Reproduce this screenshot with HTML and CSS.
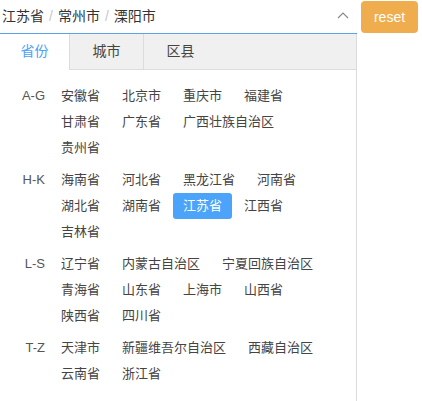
FILE: index.html
```html
<!DOCTYPE html>
<html lang="zh">
<head>
<meta charset="utf-8">
<link rel="stylesheet" href="styles.css">
</head>
<body>
<div class="bar">
  <div class="picker">
    <div class="input">
      <span class="value">江苏省<span class="sep">/</span>常州市<span class="sep">/</span>溧阳市</span>
      <svg class="chev" width="12" height="7" viewBox="0 0 12 7"><path d="M1 6 L6 1 L11 6" fill="none" stroke="#8a8a8a" stroke-width="1.2"/></svg>
    </div>
    <div class="panel">
      <div class="tabs">
        <div class="tab tab-first active">省份</div>
        <div class="tab">城市</div>
        <div class="tab">区县</div>
      </div>
      <div class="content">
        <div class="group">
          <div class="label">A-G</div>
          <div class="items">
            <span class="item">安徽省</span><span class="item">北京市</span><span class="item">重庆市</span><span class="item">福建省</span><span class="item">甘肃省</span><span class="item">广东省</span><span class="item">广西壮族自治区</span><span class="item">贵州省</span>
          </div>
        </div>
        <div class="group">
          <div class="label">H-K</div>
          <div class="items">
            <span class="item">海南省</span><span class="item">河北省</span><span class="item">黑龙江省</span><span class="item">河南省</span><span class="item">湖北省</span><span class="item">湖南省</span><span class="item selected">江苏省</span><span class="item">江西省</span><span class="item">吉林省</span>
          </div>
        </div>
        <div class="group">
          <div class="label">L-S</div>
          <div class="items">
            <span class="item">辽宁省</span><span class="item">内蒙古自治区</span><span class="item">宁夏回族自治区</span><span class="item">青海省</span><span class="item">山东省</span><span class="item">上海市</span><span class="item">山西省</span><span class="item">陕西省</span><span class="item">四川省</span>
          </div>
        </div>
        <div class="group">
          <div class="label">T-Z</div>
          <div class="items">
            <span class="item">天津市</span><span class="item">新疆维吾尔自治区</span><span class="item">西藏自治区</span><span class="item">云南省</span><span class="item">浙江省</span>
          </div>
        </div>
      </div>
    </div>
  </div>
  <button class="reset">reset</button>
</div>
</body>
</html>
```

FILE: styles.css
```css
html, body {
  margin: 0;
  padding: 0;
  background: #fff;
}
body {
  font-family: "Liberation Sans", "Noto Sans CJK SC", sans-serif;
  color: #333;
}
.bar {
  display: flex;
  align-items: flex-start;
}
.picker {
  width: 357px;
  flex: none;
}
.input {
  height: 33px;
  border-bottom: 1px solid #5aa2ea;
  display: flex;
  align-items: center;
  padding-left: 2px;
  font-size: 14px;
  color: #333;
  position: relative;
}
.value {
  flex: 1;
  line-height: 33px;
}
.sep {
  color: #c8c8c8;
  padding: 0 5px;
}
.chev {
  margin-right: 8px;
  margin-top: -3px;
}
.panel {
  border-right: 1px solid #dcdcdc;
  height: 367px;
  box-sizing: border-box;
}
.tabs {
  display: flex;
  height: 36px;
  box-sizing: border-box;
  background: #f0f0f0;
  border-bottom: 1px solid #dcdcdc;
}
.tab {
  width: 73px;
  border-left: 1px solid #dcdcdc;
  font-size: 14px;
  line-height: 35px;
  text-align: center;
  color: #444;
}
.tab-first {
  width: 69px;
  border-left: none;
}
.tab.active {
  background: #fff;
  color: #4a9ff9;
  height: 36px;
}
.content {
  padding: 10px 16px 0 0;
}
.group {
  display: flex;
  padding: 3px 0;
}
.label {
  width: 45px;
  flex: none;
  text-align: right;
  font-size: 13px;
  line-height: 26px;
  color: #555;
}
.items {
  flex: 1;
  margin-left: 5px;
  display: flex;
  flex-wrap: wrap;
}
.item {
  padding: 0 10px;
  margin: 0 1px;
  font-size: 13px;
  line-height: 26px;
  color: #444;
  border-radius: 3px;
  white-space: nowrap;
}
.item.selected {
  background: #4ba3fa;
  color: #fff;
}
.reset {
  margin: 1px 0 0 4px;
  width: 57px;
  height: 32px;
  border: none;
  border-radius: 4px;
  background: #f0ad4e;
  color: #fff;
  font-family: "Liberation Sans", sans-serif;
  font-size: 14px;
  padding: 0;
}
```
